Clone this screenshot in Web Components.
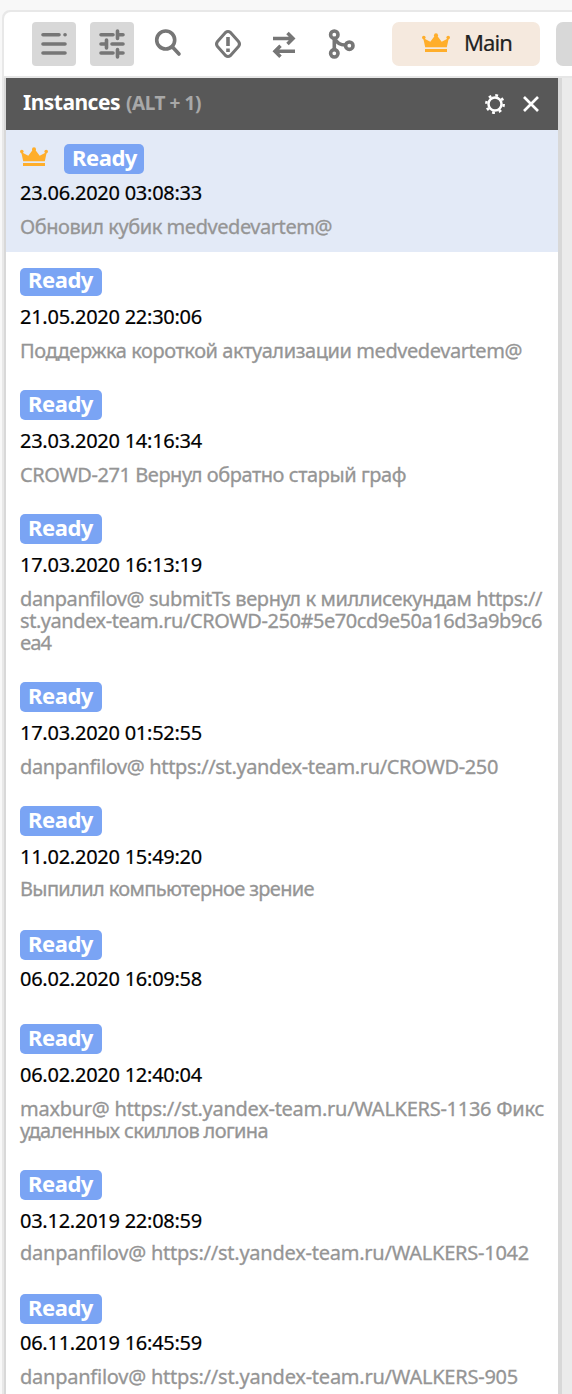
<!DOCTYPE html>
<html lang="en">
<head>
<meta charset="utf-8">
<title>Instances</title>
<style>
html,body{margin:0;height:1394px;overflow:hidden;background:#f8f8f8;font-family:"Noto Sans","Open Sans",sans-serif}
</style>
</head>
<body>
<app-shell>
  <tool-bar slot="top"></tool-bar>
  <instances-panel></instances-panel>
</app-shell>
<script>
const define = (name, html, setup) => customElements.define(name, class extends HTMLElement {
  connectedCallback() {
    if (this.shadowRoot) return;
    this.attachShadow({mode: 'open'}).innerHTML = typeof html === 'function' ? html(this) : html;
    if (setup) setup(this);
  }
});

// One line of text, tracked so that it takes up the given width.
define('fit-text', el => `<style>:host{display:block;white-space:nowrap}span{display:inline-block;white-space:pre}</style><span>${el.getAttribute('text')}</span>`, el => {
  const s = el.shadowRoot.querySelector('span'), w = +el.getAttribute('w');
  const n = el.getAttribute('text').length;
  s.style.letterSpacing = (w - s.getBoundingClientRect().width) / n + 'px';
});

define('crown-icon', `<style>:host{display:block;width:28px;height:20px}svg{display:block}</style>
<svg width="28" height="20" viewBox="0 0 28 20" fill="#ffae2b"><circle cx="1.8" cy="4.6" r="1.8"/><circle cx="14" cy="2.2" r="2"/><circle cx="26.2" cy="4.6" r="1.8"/><path d="M1.2 5L8.300 8.700L13 2.500h2L19.700 8.700L26.800 5L24.800 14.300H3.200zM3 16h22v3H3z"/></svg>`);

define('tool-button', `<style>:host{display:flex;width:44px;height:44px;border-radius:4px;flex:none}:host([active]){background:#d8d8d8}::slotted(svg){display:block}</style><slot></slot>`);

define('tool-bar', `<style>
:host{display:flex;height:64px;box-sizing:border-box;padding:10px 0 0 28px;gap:14px;background:#fff;overflow:hidden;border-radius:7px 0 0 0}
svg{fill:none;stroke:#767676;stroke-width:3.6;stroke-linecap:round;stroke-linejoin:round}
.main{display:flex;flex:none;width:148px;height:44px;box-sizing:border-box;padding:11px 0 0 30px;gap:14px;border-radius:7px;background:#f5e9de;margin-left:12px;color:#222;font-size:22px}
.main fit-text{line-height:18px;-webkit-text-stroke:.2px}
.next{flex:none;width:44px;height:44px;border-radius:7px;background:#d8d8d8;margin-left:2px}
</style>
<tool-button active><svg width="44" height="44"><path d="M11 12.700H27M33 12.700h.1M11 22H33M11 31H33"/></svg></tool-button>
<tool-button active><svg width="44" height="44"><path d="M11 12.700H23M29 12.700H33M27.500 9v7.500M11 22h5M22 22H33M16.500 18v8M11 31H23M29 31H33M27.500 27.500V35"/></svg></tool-button>
<tool-button><svg width="44" height="44"><circle cx="17.700" cy="18" r="9"/><path d="M24.500 25l6.500 7"/></svg></tool-button>
<tool-button><svg width="44" height="44"><path stroke-width="3" d="M19.500 10.500q2.500-2 5 0l8 9q2 2.500 0 5l-8 9q-2.500 2-5 0l-8-9q-2-2.500 0-5z"/><path stroke-linecap="butt" d="M22 15v9M22 26.500v3.500"/></svg></tool-button>
<tool-button><svg width="44" height="44"><path stroke-width="3.500" stroke-linecap="butt" stroke-linejoin="miter" d="M9 16.500H29M23.500 11l5.500 5.500-5.500 5.500M31 29.300H11M16.500 23.800l-5.500 5.500 5.500 5.500"/></svg></tool-button>
<tool-button><svg width="44" height="44"><circle cx="12.300" cy="12.700" r="3.700"/><circle cx="12.300" cy="31.300" r="3.700"/><circle cx="27.300" cy="23.700" r="3.700"/><path d="M12.300 16.500v10.500M13 17q3 6 10 6"/></svg></tool-button>
<div class="main"><crown-icon></crown-icon><fit-text text="Main" w="48"></fit-text></div>
<div class="next"></div>`);

define('app-shell', `<style>
:host{display:flex;flex-direction:column;box-sizing:border-box;width:580px;height:1394px;margin-top:10px;margin-left:2px;border:2px solid #e8e8e8;border-radius:8px 0 0 0;background:#ebebeb}
.line{height:2px;background:#e6e6e6;flex:none}
</style><slot name="top"></slot><div class="line"></div><slot></slot>`);

define('status-badge', `<style>
:host{display:block;box-sizing:border-box;width:82px;height:30px;padding:0 0 0 8px;border-radius:5px;background:#7aa4f4;color:#fff;font-size:22px;font-weight:700;line-height:30px}
fit-text{height:28px;line-height:var(--lh,27px)}
</style><fit-text text="Ready" w="65"></fit-text>`);

define('instance-item', el => {
  const a = k => el.getAttribute(k);
  const lines = (a('lines') || '').split('|').filter(Boolean);
  return `<style>
:host{display:block;box-sizing:border-box;height:${a('h')}px;padding:${a('pt') || 14}px 0 0 14px;font-size:20px;line-height:22px;color:#000}
:host([selected]){background:#e3eaf7}
.head{display:flex;gap:16px}
:host([selected]) status-badge{width:80px}
:host([short]) status-badge{height:28px;--lh:23px}
.date{margin-top:${+(a('dg') || 9) + 1}px;-webkit-text-stroke:.2px}
.text{margin-top:${a('tg') || 12}px;color:#959595;-webkit-text-stroke:.3px}
</style><div class="head">${el.hasAttribute('selected') ? '<crown-icon style="margin-top:3px"></crown-icon>' : ''}<status-badge></status-badge></div>
<fit-text class="date" text="${a('date')}" w="182"></fit-text>
<div class="text">${lines.map(l => { const [t, w] = l.split('~'); return `<fit-text text="${t}" w="${w}"></fit-text>`; }).join('')}</div>`;
});

define('panel-header', `<style>
:host{display:flex;height:52px;background:#585858;color:#fff;font-weight:700;font-size:20px;line-height:50px}
.name{margin-left:17px;font-size:21px;line-height:48px}.key{margin-left:6px;color:#a8a8a8;font-size:19px;line-height:51px}
svg{display:block;margin-left:auto}
</style><fit-text class="name" text="Instances" w="97"></fit-text><fit-text class="key" text="(ALT + 1)" w="75"></fit-text>
<svg width="82" height="52" fill="none" stroke="#fff"><circle cx="19" cy="26" r="6.500" stroke-width="2.500"/><circle cx="19" cy="26" r="8.700" stroke-width="2.500" stroke-dasharray="2.800 4.033" /><path stroke-width="2.700" d="M48 19l14 14M62 19l-14 14"/></svg>`);

define('instances-panel', `<style>
:host{display:block;flex:1;width:552px;background:#fff;border-left:2px solid #d8d8d8;border-right:4px solid #d8d8d8;margin-left:0;overflow:hidden}
</style>
<panel-header></panel-header>
<instance-item selected h="122" dg="7" date="23.06.2020 03:08:33" lines="Обновил кубик medvedevartem@~312"></instance-item>
<instance-item short h="124" pt="16" date="21.05.2020 22:30:06" lines="Поддержка короткой актуализации medvedevartem@~502"></instance-item>
<instance-item h="124" date="23.03.2020 14:16:34" lines="CROWD-271 Вернул обратно старый граф~386"></instance-item>
<instance-item h="168" date="17.03.2020 16:13:19" lines="danpanfilov@ submitTs вернул к миллисекундам https://~522|st.yandex-team.ru/CROWD-250#5e70cd9e50a16d3a9b9c6~522|ea4~31"></instance-item>
<instance-item h="124" date="17.03.2020 01:52:55" lines="danpanfilov@ https://st.yandex-team.ru/CROWD-250~478"></instance-item>
<instance-item h="124" tg="10" date="11.02.2020 15:49:20" lines="Выпилил компьютерное зрение~294"></instance-item>
<instance-item h="94" dg="7" date="06.02.2020 16:09:58"></instance-item>
<instance-item h="146" date="06.02.2020 12:40:04" lines="maxbur@ https://st.yandex-team.ru/WALKERS-1136 Фикс~524|удаленных скиллов логина~248"></instance-item>
<instance-item h="124" tg="10" date="03.12.2019 22:08:59" lines="danpanfilov@ https://st.yandex-team.ru/WALKERS-1042~509"></instance-item>
<instance-item h="124" dg="7" date="06.11.2019 16:45:59" lines="danpanfilov@ https://st.yandex-team.ru/WALKERS-905~498"></instance-item>`);
</script>
</body>
</html>
